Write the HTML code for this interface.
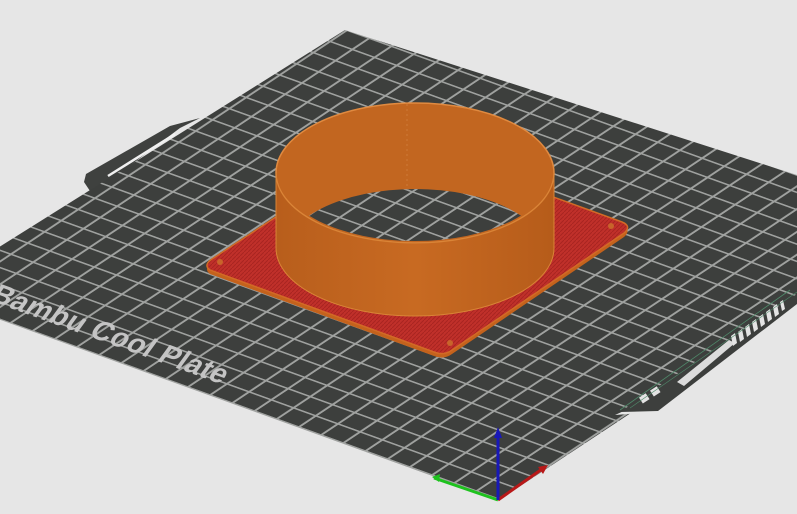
<!DOCTYPE html>
<html><head><meta charset="utf-8"><style>
html,body{margin:0;padding:0;background:#e6e6e6;overflow:hidden}
svg{display:block}
</style></head><body>
<svg width="797" height="514" viewBox="0 0 797 514" xmlns="http://www.w3.org/2000/svg">
<defs>
<pattern id="grid" width="10" height="10" patternUnits="userSpaceOnUse" patternTransform="matrix(1.68 -1.12 -2.22 -0.8 499 500)">
  <rect width="10" height="10" fill="#3d3f3d"/>
  <path d="M0.5 0 V10 M0 0.5 H10" stroke="#a0a2a0" stroke-width="0.95" fill="none"/>
</pattern>
<clipPath id="hole">
  <ellipse cx="415" cy="255" rx="132" ry="66"/>
</clipPath>
<clipPath id="topin">
  <ellipse cx="415" cy="173" rx="136" ry="68"/>
</clipPath>
<linearGradient id="ow" x1="0" x2="1" y1="0" y2="0">
  <stop offset="0" stop-color="#b85e1c"/>
  <stop offset="0.5" stop-color="#c86a22"/>
  <stop offset="1" stop-color="#b65c1a"/>
</linearGradient>
<pattern id="red" width="4" height="4" patternUnits="userSpaceOnUse">
  <rect width="4" height="4" fill="#c0302a"/>
  <path d="M0 4 L4 0" stroke="#a82420" stroke-width="1"/>
</pattern>
</defs>
<rect width="797" height="514" fill="#e6e6e6"/>
<g id="plate">
  <polygon points="84,182 86,174 170,126 200,118 180,128 92,194" fill="#3f413f"/>
  <polygon points="345,30 928,217 499,500 -74,293" fill="url(#grid)"/>
</g>
<line x1="108" y1="176" x2="175" y2="134" stroke="#f0f0f0" stroke-width="2.5"/>
<polygon points="615,415 655,412 800,300 800,330" fill="#e6e6e6"/>
<polygon points="620,412 658,411 797,304 797,294" fill="#3d3f3d"/>
<polygon points="677,382 729,340 735,343 684,386" fill="#dcdcdc"/>
<g fill="#e4e4e4">
  <polygon points="731,336 735,333 737,343 733,346"/>
  <polygon points="738,332 742,329 744,339 740,342"/>
  <polygon points="745,327 749,324 751,334 747,337"/>
  <polygon points="752,322 756,319 758,329 754,332"/>
  <polygon points="759,317 763,314 765,324 761,327"/>
  <polygon points="766,312 770,309 772,319 768,322"/>
  <polygon points="773,307 777,304 779,314 775,317"/>
  <polygon points="780,302 783,300 785,309 782,311"/>
  <rect x="640" y="395" width="8" height="7" transform="rotate(-33 644 398)"/>
  <rect x="651" y="388" width="8" height="7" transform="rotate(-33 655 391)"/>
</g>
<line x1="620" y1="410" x2="790" y2="290" stroke="#4f8a6a" stroke-width="0.8"/>
<line x1="630" y1="408" x2="797" y2="292" stroke="#4f8a6a" stroke-width="0.6"/>
<text transform="matrix(0.943,0.34,-0.62,0.85,-12,300)" font-family="Liberation Sans, sans-serif" font-weight="bold" font-size="28" fill="#c4c4c4" letter-spacing="0.5">Bambu Cool Plate</text>
<path d="M210,270 Q203,265 212,259 L385,145 Q395,139 405,143 L622,222 Q632,226 624,233 L452,350 Q444,356 434,352 Z" transform="translate(0,4)" fill="#c4621c"/>
<path d="M210,270 Q203,265 212,259 L385,145 Q395,139 405,143 L622,222 Q632,226 624,233 L452,350 Q444,356 434,352 Z" fill="url(#red)" stroke="#d26a26" stroke-width="1.5"/>
<circle cx="220" cy="262" r="3" fill="#c8642a"/>
<circle cx="611" cy="226" r="3" fill="#c8642a"/>
<circle cx="450" cy="343" r="3" fill="#c8642a"/>
<ellipse cx="415" cy="173" rx="139" ry="70" fill="#c26620" stroke="#e08a40" stroke-width="1.5"/>
<g clip-path="url(#topin)"><g clip-path="url(#hole)"><use href="#plate"/></g></g>
<path d="M276,173 A139,70 0 0 0 554,173 L554,248 A139,68 0 0 1 276,248 Z" fill="url(#ow)" stroke="#d98436" stroke-width="1"/>
<line x1="407" y1="104" x2="407" y2="186" stroke="#d8884a" stroke-width="0.6" stroke-dasharray="2 3"/>
<line x1="498" y1="500" x2="434" y2="478" stroke="#1ec21e" stroke-width="3"/>
<polygon points="432,477 440,474 439,482" fill="#1ec21e"/>
<line x1="498" y1="500" x2="545" y2="467" stroke="#b81818" stroke-width="3"/>
<polygon points="548,465 538,467 543,474" fill="#b81818"/>
<line x1="498" y1="500" x2="498" y2="432" stroke="#1818b8" stroke-width="3"/>
<polygon points="498,427 494,438 502,438" fill="#1818b8"/>
</svg>
</body></html>
